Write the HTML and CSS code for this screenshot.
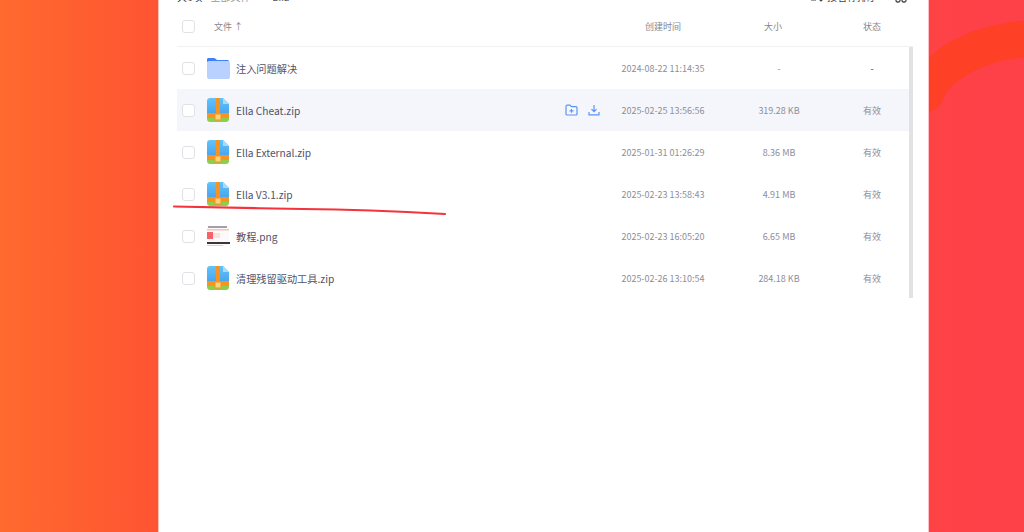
FILE: index.html
```html
<!DOCTYPE html>
<html>

<head>
	<title>Ella</title>
	<link rel="stylesheet" href="styles.css">
</head>

<body>
	<svg class="bg-arc" width="1024" height="532" viewBox="0 0 1024 532">
		<path d="M925 94C938 62 985 39 1034 39" fill="none" stroke="#fe4026" stroke-width="37" stroke-linecap="round" />
	</svg>

	<div class="panel">
		<div class="toolbar">
			<div class="crumbs"><b>共6项</b><span>全部文件</span><span>&gt;</span><span>Ella</span></div>
			<div class="sort">
				<svg width="14" height="12" viewBox="0 0 14 12">
					<path d="M1 2h7M1 5.500h7M1 9h5M11 1v9M9 8l2 2 2-2" fill="none" stroke="#444" stroke-width="1.200" />
				</svg>
				<span>按名称排序</span>
				<svg class="grid-icon" width="12" height="12" viewBox="0 0 12 12">
					<g fill="none" stroke="#444" stroke-width="1.300">
						<rect x="1" y="1" width="4" height="4" rx="1.500" />
						<rect x="7" y="1" width="4" height="4" rx="1.500" />
						<rect x="1" y="7" width="4" height="4" rx="1.500" />
						<rect x="7" y="7" width="4" height="4" rx="1.500" />
					</g>
				</svg>
			</div>
		</div>

		<div class="head row">
			<div class="check-cell"><i class="check"></i></div>
			<div class="head-name">文件 ↑</div>
			<div></div>
			<div class="time">创建时间</div>
			<div class="size head-size">大小</div>
			<div class="state">状态</div>
		</div>

		<div class="list-wrap">
			<div class="list">
				<div class="row">
					<div class="check-cell"><i class="check"></i></div>
					<div class="icon-cell">
						<svg width="24" height="22" viewBox="0 0 24 22">
							<path d="M1 5V2.500C1 1.500 1.700 1 2.500 1H8.500L11 3H21.500C22.400 3 23 3.600 23 4.500V6Z" fill="#3f80fb" />
							<rect x="1" y="4" width="23" height="18" rx="2" fill="#b9d1ff" />
						</svg>
					</div>
					<div class="name">注入问题解决</div>
					<div></div>
					<div class="time">2024-08-22 11:14:35</div>
					<div class="size">-</div>
					<div class="state dark">-</div>
				</div>

				<div class="row active">
					<div class="check-cell"><i class="check"></i></div>
					<div class="icon-cell"><svg class="zip"><use href="#zip" /></svg></div>
					<div class="name">Ella Cheat.zip</div>
					<div class="actions">
						<svg width="13" height="12" viewBox="0 0 13 12">
							<path d="M1 2.500C1 1.700 1.500 1.200 2.200 1.200H5L6.500 2.700H11C11.600 2.700 12 3.100 12 3.700V10C12 10.600 11.600 11 11 11H2C1.400 11 1 10.600 1 10ZM4.500 6.900H8.500M6.500 5V8.800" fill="none" stroke="#5b94f7" stroke-width="1.200" />
						</svg>
						<svg width="12" height="12" viewBox="0 0 12 12">
							<path d="M6 1V7.500M3.500 5.200L6 7.700 8.500 5.200M1 8V10.800H11V8" fill="none" stroke="#5b94f7" stroke-width="1.200" />
						</svg>
					</div>
					<div class="time">2025-02-25 13:56:56</div>
					<div class="size">319.28 KB</div>
					<div class="state">有效</div>
				</div>

				<div class="row">
					<div class="check-cell"><i class="check"></i></div>
					<div class="icon-cell"><svg class="zip"><use href="#zip" /></svg></div>
					<div class="name">Ella External.zip</div>
					<div></div>
					<div class="time">2025-01-31 01:26:29</div>
					<div class="size">8.36 MB</div>
					<div class="state">有效</div>
				</div>

				<div class="row">
					<div class="check-cell"><i class="check"></i></div>
					<div class="icon-cell"><svg class="zip"><use href="#zip" /></svg></div>
					<div class="name">Ella V3.1.zip</div>
					<div></div>
					<div class="time">2025-02-23 13:58:43</div>
					<div class="size">4.91 MB</div>
					<div class="state">有效</div>
				</div>

				<div class="row">
					<div class="check-cell"><i class="check"></i></div>
					<div class="icon-cell">
						<!-- 教程.png 的缩略图 -->
						<svg width="24" height="22" viewBox="0 0 24 22">
							<rect x="1" y="1" width="22" height="20" fill="#fbf9f9" />
							<rect x="2" y="1" width="19" height="2" fill="#a5a0a8" />
							<rect x="1" y="4" width="22" height="1.500" fill="#f4c6b8" />
							<rect x="1" y="7" width="6" height="7" fill="#f6626a" />
							<rect x="7" y="8" width="7" height="5" fill="#fce0e0" />
							<rect x="1" y="17" width="23" height="2" fill="#3a3638" />
							<rect x="1" y="20" width="16" height="1" fill="#d8d4d6" />
						</svg>
					</div>
					<div class="name">教程.png</div>
					<div></div>
					<div class="time">2025-02-23 16:05:20</div>
					<div class="size">6.65 MB</div>
					<div class="state">有效</div>
				</div>

				<div class="row">
					<div class="check-cell"><i class="check"></i></div>
					<div class="icon-cell"><svg class="zip"><use href="#zip" /></svg></div>
					<div class="name">清理残留驱动工具.zip</div>
					<div></div>
					<div class="time">2025-02-26 13:10:54</div>
					<div class="size">284.18 KB</div>
					<div class="state">有效</div>
				</div>
			</div>
			<div class="scrollbar"></div>
		</div>
	</div>

	<!-- 红色手绘下划线 -->
	<svg class="scribble" width="1024" height="532" viewBox="0 0 1024 532">
		<path d="M174 206.500C215 207 260 208.500 303 209C350 209.500 400 211.500 445 214" fill="none" stroke="#f4333c" stroke-width="2.200" stroke-linecap="round" />
	</svg>

	<svg width="0" height="0" class="defs">
		<defs>
			<linearGradient id="zipBlue" x1="0" y1="0" x2="0" y2="1">
				<stop offset="0" stop-color="#62c3fb" />
				<stop offset="1" stop-color="#4aa6ee" />
			</linearGradient>
			<clipPath id="zipClip">
				<path d="M3 0H16L22 6V21C22 22.700 20.700 24 19 24H3C1.300 24 0 22.700 0 21V3C0 1.300 1.300 0 3 0Z" />
			</clipPath>
			<g id="zip" clip-path="url(#zipClip)">
				<rect width="22" height="15" fill="url(#zipBlue)" />
				<rect y="15" width="22" height="5" fill="#f7931e" />
				<rect y="20" width="22" height="4" fill="#8ccf4d" />
				<rect x="9" width="4" height="17" fill="#f7931e" />
				<rect x="8" y="16" width="6" height="6" fill="#fbd27a" stroke="#f7931e" stroke-width="1" />
				<path d="M16 0L22 6H16Z" fill="#a4dcfb" />
			</g>
		</defs>
	</svg>
</body>

</html>
```

FILE: styles.css
```css
html,
body {
	height: 532px;
	overflow: hidden;
}

body {
	margin: 0;
	font-family: "Noto Sans CJK SC", "Noto Sans", sans-serif;
	background: linear-gradient(90deg, #ff6a2e 0, #ff5433 158px, #fd4a3e 600px, #fe4049 1024px);
}

.bg-arc {
	position: absolute;
	top: 0;
	left: 0;
}

.scribble {
	position: absolute;
	top: 0;
	left: 0;
	pointer-events: none;
}

.defs {
	position: absolute;
}

.panel {
	position: relative;
	box-sizing: border-box;
	width: 771px;
	height: 545px;
	margin: -13px 0 0 158px;
	padding-left: 18px;
	background-color: #fff;
	border-left: 1px solid #ffc4b4;
	border-right: 1px solid #ffc0c4;
}

.toolbar {
	display: flex;
	justify-content: space-between;
	align-items: center;
	box-sizing: border-box;
	height: 19px;
	padding-right: 21px;
	font-size: 10px;
	color: #999;
}

.crumbs {
	display: flex;
	gap: 8px;
}

.crumbs b {
	font-weight: normal;
	color: #333;
}

.crumbs span:last-child {
	color: #555;
}

.sort {
	display: flex;
	align-items: center;
	gap: 3px;
	color: #444;
}

.grid-icon {
	margin-left: 15px;
}

.row {
	display: grid;
	grid-template-columns: 29px 30px 325px 42px 120px 112px 74px;
	align-items: center;
	height: 42px;
	font-size: 9px;
	color: #8c8e9c;
}

.head {
	height: 40px;
	width: 736px;
	border-bottom: 1px solid #f1f1f4;
	color: #85878f;
}

.head-name {
	grid-column: 2 / 4;
	padding-left: 8px;
}

.head>div:nth-child(3) {
	display: none;
}

.head>div:nth-child(4) {
	grid-column: 5;
}

.head-size {
	padding-right: 12px;
}

.active {
	background-color: #f5f6fb;
}

.list-wrap {
	display: flex;
	width: 736px;
}

.list {
	width: 732px;
}

.scrollbar {
	width: 4px;
	height: 251px;
	background-color: #e2e2e4;
}

.check-cell {
	padding-left: 5px;
	display: flex;
}

.check {
	box-sizing: border-box;
	width: 13px;
	height: 13px;
	border: 1px solid #e2e2e6;
	border-radius: 3px;
	background-color: #fff;
}

.icon-cell {
	display: flex;
	align-items: center;
	height: 24px;
}

.icon-cell svg {
	display: block;
}

.zip {
	width: 22px;
	height: 24px;
	margin-left: 1px;
}

.name {
	font-size: 10.200px;
	color: #50526a;
}

.actions {
	display: flex;
	gap: 10px;
	margin-left: 4px;
}

.time,
.size,
.state {
	text-align: center;
}

.dark {
	color: #333;
}
```
